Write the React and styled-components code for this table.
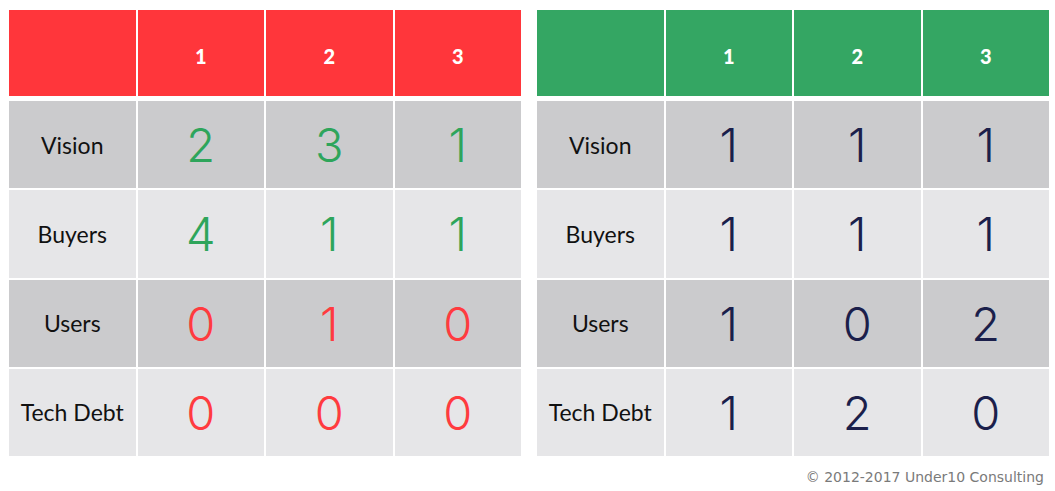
import React from "react";
import styled, { createGlobalStyle } from "styled-components";

const Global = createGlobalStyle`
  html, body { margin: 0; padding: 0; background: #ffffff; }
  body { font-family: "Lato", "Noto Sans", sans-serif; }
`;

const Page = styled.div`
  width: 1055px;
  height: 491px;
  box-sizing: border-box;
  padding: 10px 6px 0 9px;
  display: flex;
  flex-direction: column;
`;

const Tables = styled.div`
  display: flex;
  gap: 16px;
`;

const Table = styled.div`
  width: 512px;
  display: flex;
  flex-direction: column;
  gap: 5px;
`;

const Row = styled.div`
  display: grid;
  grid-template-columns: repeat(4, 1fr);
  column-gap: 2px;
  height: ${(p) => p.$h}px;
`;

const Body = styled.div`
  display: grid;
  grid-template-rows: repeat(4, 1fr);
  row-gap: 2px;
  height: 355px;
`;

const HeadCell = styled.div`
  background: ${(p) => p.$bg};
  color: #ffffff;
  font-family: "Lato", sans-serif;
  font-weight: 900;
  font-size: 20px;
  display: flex;
  align-items: center;
  justify-content: center;
  padding-top: 6px;
  box-sizing: border-box;
`;

const BodyRow = styled.div`
  display: grid;
  grid-template-columns: repeat(4, 1fr);
  column-gap: 2px;
  background: #ffffff;
`;

const Label = styled.div`
  background: ${(p) => (p.$dark ? "#cbcbcd" : "#e6e6e8")};
  color: #111111;
  font-family: "Lato", sans-serif;
  font-size: 23px;
  display: flex;
  align-items: center;
  justify-content: center;
`;

const Num = styled.div`
  background: ${(p) => (p.$dark ? "#cbcbcd" : "#e6e6e8")};
  color: ${(p) => p.$color};
  font-family: "Inter", sans-serif;
  font-weight: 300;
  font-size: 47px;
  display: flex;
  align-items: center;
  justify-content: center;
`;

const Footer = styled.div`
  margin-top: 13px;
  padding-right: 5px;
  text-align: right;
  font-family: "DejaVu Sans", Verdana, sans-serif;
  font-size: 14px;
  color: #7a7a7a;
`;

const GREEN = "#2ea55b";
const RED = "#ff3b3f";
const NAVY = "#1b1f4b";

const labels = ["Vision", "Buyers", "Users", "Tech Debt"];

const left = [
  [[2, GREEN], [3, GREEN], [1, GREEN]],
  [[4, GREEN], [1, GREEN], [1, GREEN]],
  [[0, RED], [1, RED], [0, RED]],
  [[0, RED], [0, RED], [0, RED]],
];

const right = [
  [1, 1, 1],
  [1, 1, 1],
  [1, 0, 2],
  [1, 2, 0],
].map((r) => r.map((v) => [v, NAVY]));

function ScoreTable({ head, data }) {
  return (
    <Table>
      <Row $h={86}>
        <HeadCell $bg={head} />
        {[1, 2, 3].map((n) => (
          <HeadCell key={n} $bg={head}>
            {n}
          </HeadCell>
        ))}
      </Row>
      <Body>
        {data.map((row, i) => (
          <BodyRow key={i}>
            <Label $dark={i % 2 === 0}>{labels[i]}</Label>
            {row.map(([v, c], j) => (
              <Num key={j} $dark={i % 2 === 0} $color={c}>
                {v}
              </Num>
            ))}
          </BodyRow>
        ))}
      </Body>
    </Table>
  );
}

export default function App() {
  return (
    <>
      <Global />
      <Page>
        <Tables>
          <ScoreTable head="#ff363b" data={left} />
          <ScoreTable head="#34a663" data={right} />
        </Tables>
        <Footer>© 2012-2017 Under10 Consulting</Footer>
      </Page>
    </>
  );
}
